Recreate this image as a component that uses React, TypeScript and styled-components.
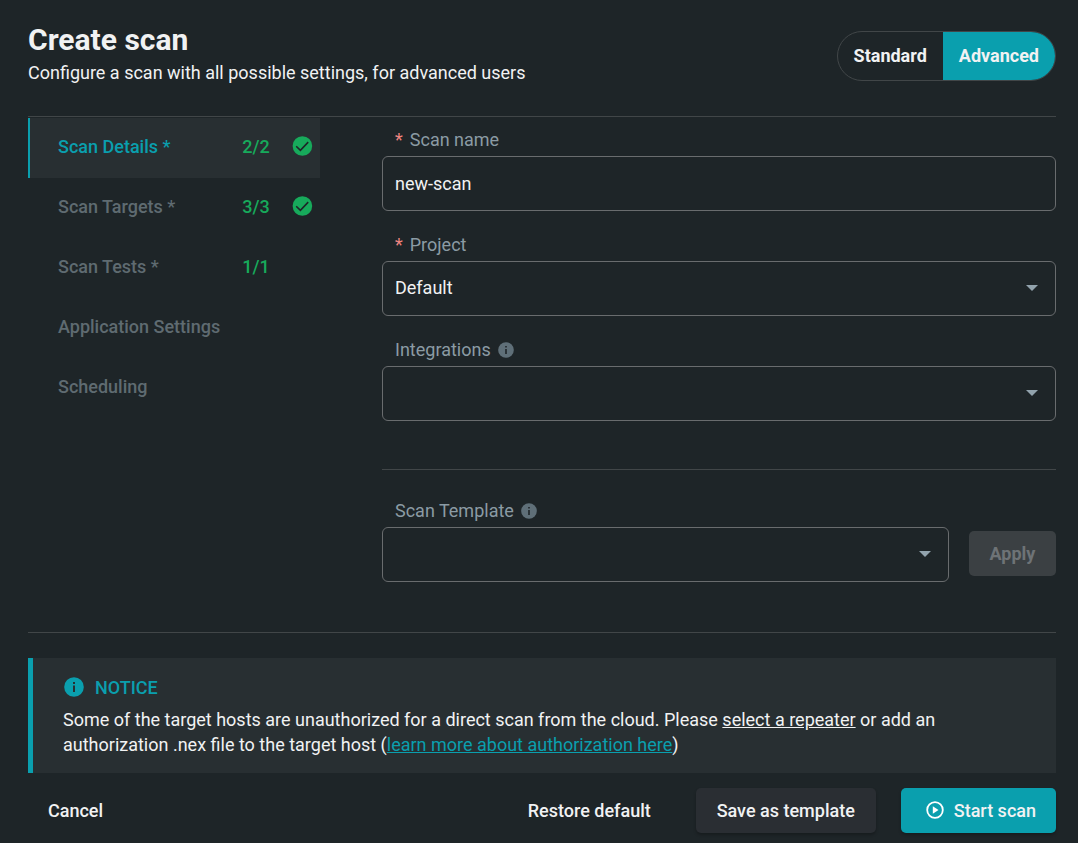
import React, { useState } from 'react';
import styled, { createGlobalStyle } from 'styled-components';

const color = {
  page: '#1e2528',
  panel: '#282f32',
  line: '#414648',
  outline: '#696c6e',
  teal: '#0a9fae',
  green: '#17aa5b',
  text: '#f1f2f3',
  label: '#8b9ba4',
  muted: '#5f6b71',
  info: '#5f6f78',
  arrow: '#92a3ad',
  required: '#ee8480',
};

const GlobalStyle = createGlobalStyle`
  *, *::before, *::after { box-sizing: border-box; }
  body { margin: 0; background: ${color.page}; }
  body, button, input, select {
    font-family: Roboto, "Liberation Sans", sans-serif;
    font-size: 18px;
    color: ${color.text};
  }
  button { cursor: pointer; }
`;

const Page = styled.main`
  padding: 24px 22px 10px 28px;
`;

const Header = styled.header`
  display: flex;
  justify-content: space-between;
  align-items: flex-start;
  padding-bottom: 29px;
  border-bottom: 1px solid ${color.line};
`;

const Title = styled.h1`
  margin: 0;
  font-size: 30px;
  line-height: 32px;
  font-weight: 700;
`;

const Subtitle = styled.p`
  margin: 3px 0 0;
  font-size: 18px;
  line-height: 28px;
`;

const ModeToggle = styled.div`
  display: flex;
  height: 50px;
  margin-top: 7px;
  border: 1px solid ${color.line};
  border-radius: 25px;
  overflow: hidden;
`;

const ModeButton = styled.button<{ $active: boolean }>`
  padding: 0 16px 2px;
  border: 0;
  background: ${(p) => (p.$active ? color.teal : 'transparent')};
  font-weight: 700;
`;

const Body = styled.div`
  display: grid;
  grid-template-columns: 292px 1fr;
  column-gap: 62px;
  padding-bottom: 50px;
  border-bottom: 1px solid ${color.line};
`;

const Steps = styled.nav`
  padding-top: 1px;
`;

const Step = styled.button<{ $active: boolean }>`
  display: grid;
  grid-template-columns: 1fr 48px 24px;
  column-gap: 10px;
  align-items: center;
  width: 100%;
  height: 60px;
  padding: 0 6px 4px 28px;
  border: 0;
  border-left: 2px solid ${(p) => (p.$active ? color.teal : 'transparent')};
  background: ${(p) => (p.$active ? color.panel : 'transparent')};
  color: ${(p) => (p.$active ? color.teal : color.muted)};
  font-weight: 500;
  text-align: left;
  white-space: nowrap;
`;

const StepCount = styled.span`
  color: ${color.green};
  text-align: center;
`;

const Form = styled.form`
  min-width: 0;
  padding-top: 9px;
`;

const Field = styled.div`
  flex: 1;
  min-width: 0;
`;

const FieldLabel = styled.label`
  display: flex;
  align-items: center;
  gap: 7px;
  height: 30px;
  padding: 0 0 3px 13px;
  color: ${color.label};
`;

const Required = styled.span`
  color: ${color.required};
`;

const Box = styled.div`
  display: grid;
  grid-template-columns: 1fr 29px;
  align-items: center;
  height: 55px;
  border: 1px solid ${color.outline};
  border-radius: 6px;
`;

const controlStyle = `
  grid-area: 1 / 1 / 2 / 3;
  width: 100%;
  height: 53px;
  padding: 0 12px;
  border: 0;
  border-radius: 6px;
  outline: 0;
  background: transparent;
  appearance: none;
`;

const TextInput = styled.input`
  ${controlStyle}
`;

const Select = styled.select`
  ${controlStyle}
  padding-bottom: 2px;
`;

const Arrow = styled.svg`
  grid-area: 1 / 2 / 2 / 3;
  margin-bottom: 1px;
  pointer-events: none;
`;

const FieldStack = styled.div`
  display: grid;
  row-gap: 20px;
  padding-bottom: 48px;
  border-bottom: 1px solid ${color.line};
`;

const TemplateRow = styled.div`
  display: flex;
  align-items: flex-end;
  gap: 20px;
  padding-top: 27px;
`;

const Button = styled.button<{ $kind?: 'plain' | 'filled' | 'primary' }>`
  display: inline-flex;
  align-items: center;
  justify-content: center;
  gap: 8px;
  height: 45px;
  padding: 0 20px 1px;
  border: 0;
  border-radius: 5px;
  font-weight: 500;
  white-space: nowrap;
  background: ${(p) =>
    p.$kind === 'primary' ? color.teal : p.$kind === 'filled' ? '#2a2e33' : 'transparent'};
  box-shadow: ${(p) => (p.$kind ? '0 2px 3px rgba(0, 0, 0, 0.25)' : 'none')};
`;

const ApplyButton = styled(Button)`
  width: 87px;
  margin-bottom: 6px;
  background: #3b4043;
  color: #6e7376;
  font-weight: 700;
  box-shadow: none;
`;

const SaveButton = styled(Button)`
  min-width: 180px;
`;

const StartButton = styled(Button)`
  min-width: 155px;
  padding-left: 23px;
`;

const Notice = styled.section`
  margin-top: 25px;
  padding: 15px 30px 16px;
  border-left: 5px solid ${color.teal};
  background: ${color.panel};
`;

const NoticeTitle = styled.h2`
  display: flex;
  align-items: center;
  gap: 11px;
  margin: 0 0 6px;
  padding-left: 1px;
  height: 28px;
  font-size: 18px;
  font-weight: 500;
  color: ${color.teal};
`;

const NoticeText = styled.p`
  margin: 0;
  max-width: 900px;
  line-height: 25px;
`;

const NoticeLink = styled.a<{ $accent?: boolean }>`
  color: ${(p) => (p.$accent ? color.teal : 'inherit')};
  text-decoration: underline;
`;

const Footer = styled.footer`
  display: flex;
  justify-content: space-between;
  padding-top: 15px;
`;

const Actions = styled.div`
  display: flex;
  gap: 25px;
`;

const CheckIcon = () => (
  <svg width="24" height="24" viewBox="0 0 24 24" aria-hidden="true">
    <circle cx="12.4" cy="12" r="9.8" fill={color.green} />
    <path d="M6.2 12.2l4.2 4.1 7.8-8.2" fill="none" stroke={color.page} strokeWidth="1.6" />
  </svg>
);

const InfoIcon = ({ size, fill, mark }: { size: number; fill: string; mark: string }) => (
  <svg width={size} height={size} viewBox="0 0 20 20" aria-hidden="true">
    <circle cx="10" cy="10" r="9.8" fill={fill} />
    <path d="M9 5h2v2H9zM9 8.6h2V15H9z" fill={mark} />
  </svg>
);

const PlayIcon = () => (
  <svg width="22" height="22" viewBox="0 0 22 22" aria-hidden="true">
    <circle cx="11" cy="11" r="7.8" fill="none" stroke="#fff" strokeWidth="1.8" />
    <path d="M8.8 7.2v7.6l5.7-3.8z" fill="#fff" />
  </svg>
);

const DropArrow = () => (
  <Arrow width="12" height="6" viewBox="0 0 12 6" aria-hidden="true">
    <path d="M0 0h12L6 6z" fill={color.arrow} />
  </Arrow>
);

const steps = [
  { name: 'Scan Details *', count: '2/2', done: true },
  { name: 'Scan Targets *', count: '3/3', done: true },
  { name: 'Scan Tests *', count: '1/1', done: false },
  { name: 'Application Settings', count: '', done: false },
  { name: 'Scheduling', count: '', done: false },
];

export default function App() {
  const [mode, setMode] = useState('Advanced');
  const [step, setStep] = useState(0);
  const [name, setName] = useState('new-scan');

  return (
    <>
      <GlobalStyle />
      <Page>
        <Header>
          <div>
            <Title>Create scan</Title>
            <Subtitle>Configure a scan with all possible settings, for advanced users</Subtitle>
          </div>
          <ModeToggle>
            {['Standard', 'Advanced'].map((m) => (
              <ModeButton key={m} type="button" $active={m === mode} aria-pressed={m === mode} onClick={() => setMode(m)}>
                {m}
              </ModeButton>
            ))}
          </ModeToggle>
        </Header>

        <Body>
          <Steps aria-label="Scan steps">
            {steps.map((s, i) => (
              <Step key={s.name} type="button" $active={i === step} onClick={() => setStep(i)}>
                <span>{s.name}</span>
                <StepCount>{s.count}</StepCount>
                {s.done && <CheckIcon />}
              </Step>
            ))}
          </Steps>

          <Form onSubmit={(e) => e.preventDefault()}>
            <FieldStack>
              <Field>
                <FieldLabel htmlFor="scan-name">
                  <Required>*</Required>Scan name
                </FieldLabel>
                <Box>
                  <TextInput id="scan-name" value={name} onChange={(e) => setName(e.target.value)} />
                </Box>
              </Field>
              <Field>
                <FieldLabel htmlFor="project">
                  <Required>*</Required>Project
                </FieldLabel>
                <Box>
                  <Select id="project">
                    <option>Default</option>
                  </Select>
                  <DropArrow />
                </Box>
              </Field>
              <Field>
                <FieldLabel htmlFor="integrations">
                  Integrations
                  <InfoIcon size={16} fill={color.info} mark={color.page} />
                </FieldLabel>
                <Box>
                  <Select id="integrations">
                    <option value="" />
                  </Select>
                  <DropArrow />
                </Box>
              </Field>
            </FieldStack>

            <TemplateRow>
              <Field>
                <FieldLabel htmlFor="template">
                  Scan Template
                  <InfoIcon size={16} fill={color.info} mark={color.page} />
                </FieldLabel>
                <Box>
                  <Select id="template">
                    <option value="" />
                  </Select>
                  <DropArrow />
                </Box>
              </Field>
              <ApplyButton type="submit" disabled>
                Apply
              </ApplyButton>
            </TemplateRow>
          </Form>
        </Body>

        <Notice>
          <NoticeTitle>
            <InfoIcon size={20} fill={color.teal} mark={color.panel} />
            NOTICE
          </NoticeTitle>
          <NoticeText>
            Some of the target hosts are unauthorized for a direct scan from the cloud. Please{' '}
            <NoticeLink href="#repeater">select a repeater</NoticeLink> or add an authorization .nex file to the
            target host (
            <NoticeLink href="#authorization" $accent>
              learn more about authorization here
            </NoticeLink>
            )
          </NoticeText>
        </Notice>

        <Footer>
          <Button type="button">Cancel</Button>
          <Actions>
            <Button type="button">Restore default</Button>
            <SaveButton type="button" $kind="filled">
              Save as template
            </SaveButton>
            <StartButton type="button" $kind="primary">
              <PlayIcon />
              Start scan
            </StartButton>
          </Actions>
        </Footer>
      </Page>
    </>
  );
}
